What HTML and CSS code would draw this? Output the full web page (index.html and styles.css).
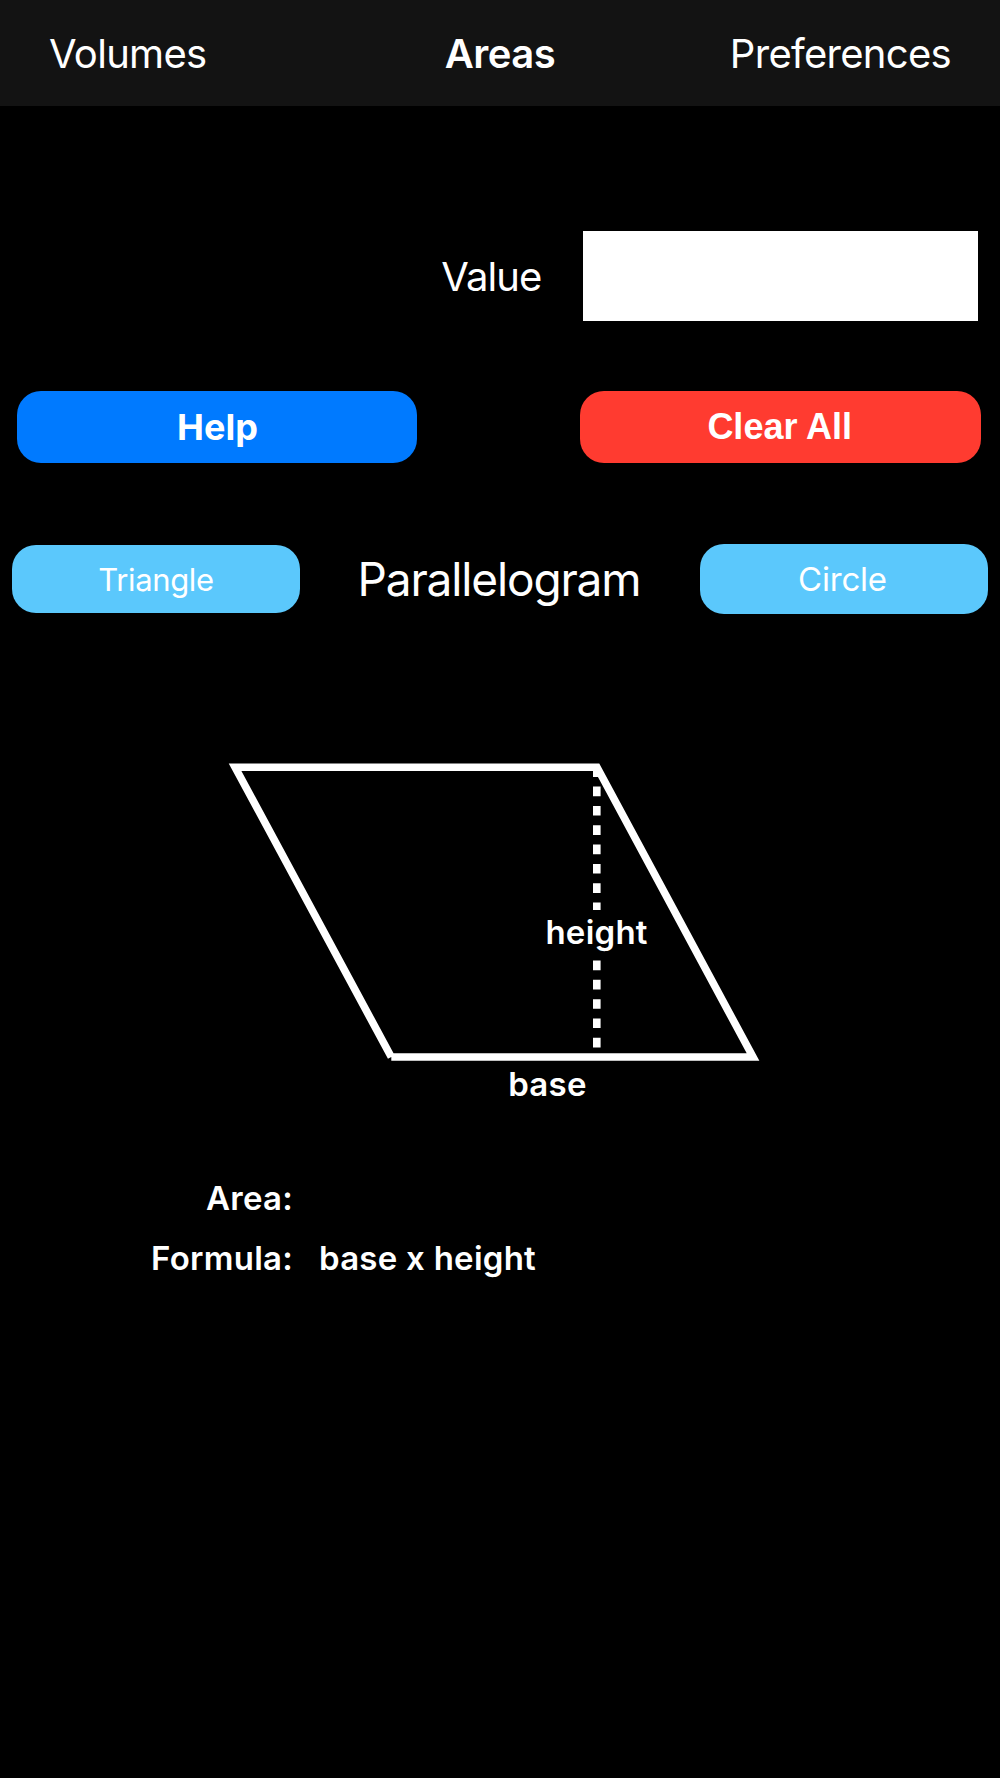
FILE: index.html
```
<!DOCTYPE html>
<html lang="en">
<head>
  <meta charset="UTF-8">
  <title>Areas</title>
  <link rel="stylesheet" href="styles.css">
</head>
<body>
  <nav class="navbar">
    <a class="nav-link">Volumes</a>
    <h1>Areas</h1>
    <a class="nav-link right">Preferences</a>
  </nav>

  <div class="value-row">
    <label for="value">Value</label>
    <input type="text" id="value">
  </div>

  <div class="actions">
    <button class="help">Help</button>
    <button class="clear">Clear All</button>
  </div>

  <div class="shapes">
    <button class="prev">Triangle</button>
    <h2>Parallelogram</h2>
    <button class="next">Circle</button>
  </div>

  <svg class="figure" width="1000" height="380" viewBox="0 740 1000 380">
    <path class="outline" d="M391.3 1057 H753 L597 767.3 H235.1 L391.3 1057"/>
    <!-- height, broken where its label sits -->
    <path class="dashed" d="M596.8 767.3 V910"/>
    <path class="dashed" d="M596.8 960.5 V1053"/>
    <text x="596.6" y="944.2">height</text>
    <text x="547.4" y="1096.2">base</text>
  </svg>

  <dl class="result">
    <dt>Area:</dt>
    <dd></dd>
    <dt>Formula:</dt>
    <dd>base x height</dd>
  </dl>
</body>
</html>
```
FILE: styles.css
```
body {
  margin: 0;
  height: 1778px;
  background-color: #000;
  color: #fff;
  font-family: Inter, "Liberation Sans", sans-serif;
}
.navbar {
  display: grid;
  grid-template-columns: 1fr auto 1fr;
  align-items: center;
  height: 106px;
  padding: 0 49px;
  box-sizing: border-box;
  background-color: #131313;
  font-size: 40px;
}
.nav-link {
  letter-spacing: -0.7px;
}
.right {
  text-align: right;
}
h1 {
  margin: 0;
  font-size: 40px;
  font-weight: 600;
  letter-spacing: -0.5px;
}
.value-row {
  display: flex;
  justify-content: flex-end;
  align-items: center;
  gap: 41.5px;
  margin: 125px 22px 0 0;
  font-size: 40px;
}
.value-row label {
  padding-top: 2px;
  letter-spacing: -0.9px;
}
.value-row input {
  width: 395px;
  height: 89.5px;
  box-sizing: border-box;
  padding: 0 12px;
  border: none;
  background-color: #fff;
  font-size: 40px;
}
button {
  padding: 0;
  border: none;
  border-radius: 24px;
  color: #fff;
  font-family: inherit;
}
.actions {
  display: flex;
  justify-content: space-between;
  margin: 70px 19.5px 0 17px;
}
.actions button {
  width: 400px;
  height: 72.5px;
  font-size: 36px;
  font-weight: 700;
}
.actions .help {
  padding-left: 1px;
  background-color: #007aff;
}
.actions .clear {
  width: 400.5px;
  padding-right: 1px;
  background-color: #ff3b30;
  font-family: "Liberation Sans", Arial, sans-serif;
}
.shapes {
  display: flex;
  justify-content: space-between;
  align-items: center;
  height: 70px;
  margin: 81px 12px 0;
}
.shapes button {
  width: 288px;
  background-color: #5bc8fc;
}
.shapes .prev {
  height: 68px;
  font-size: 31px;
  letter-spacing: -0.35px;
}
.shapes .next {
  height: 70px;
  padding-right: 3px;
  font-size: 33px;
  letter-spacing: -0.2px;
}
h2 {
  margin: 0;
  padding-right: 2px;
  font-size: 46px;
  font-weight: 400;
  letter-spacing: -1.15px;
}
.figure {
  display: block;
  margin-top: 126px;
}
.outline, .dashed {
  fill: none;
  stroke: #fff;
  stroke-width: 7.6;
}
.dashed {
  stroke-dasharray: 9.66;
}
.figure text {
  fill: #fff;
  font-size: 33px;
  font-weight: 600;
  letter-spacing: 0.25px;
  text-anchor: middle;
}
.result {
  display: grid;
  grid-template-columns: 293px 1fr;
  grid-auto-rows: 60px;
  column-gap: 26px;
  align-items: center;
  margin: 48px 0 0;
  font-size: 33px;
  font-weight: 600;
  letter-spacing: 0.25px;
}
dt {
  text-align: right;
}
dd {
  margin: 0;
}
```
